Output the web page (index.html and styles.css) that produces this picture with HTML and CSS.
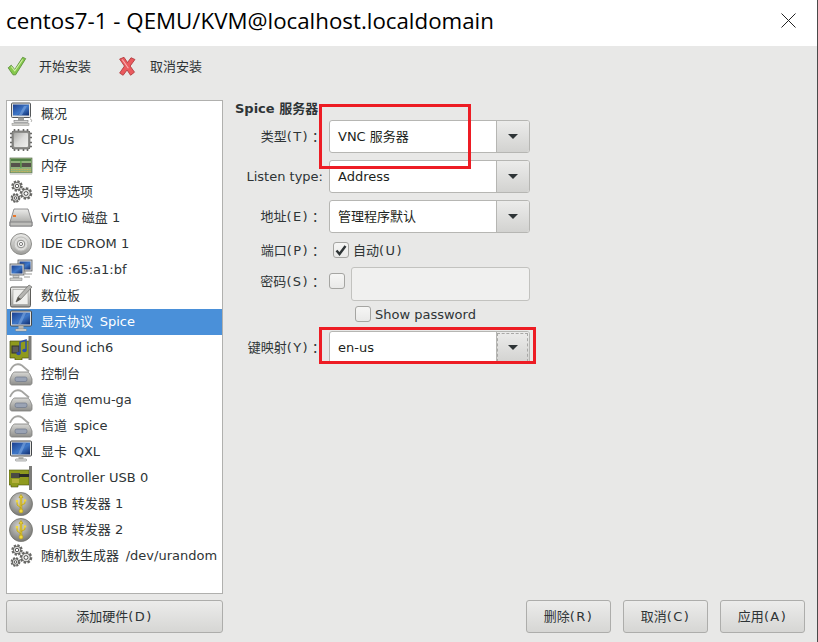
FILE: index.html
```html
<!DOCTYPE html>
<html lang="zh-CN">
<head>
<meta charset="utf-8">
<title>centos7-1 - QEMU/KVM@localhost.localdomain</title>
<link rel="stylesheet" href="styles.css">
</head>
<body>
<svg class="defs" width="0" height="0" aria-hidden="true">
  <defs>
    <linearGradient id="g-screen" x1="0" y1="0" x2="1" y2="1"><stop offset="0" stop-color="#1b3f8f"/><stop offset=".55" stop-color="#3f78c8"/><stop offset="1" stop-color="#0f2c6e"/></linearGradient>
    <linearGradient id="g-metal" x1="0" y1="0" x2="0" y2="1"><stop offset="0" stop-color="#ececea"/><stop offset="1" stop-color="#9c9c99"/></linearGradient>
    <linearGradient id="g-body" x1="0" y1="0" x2="0" y2="1"><stop offset="0" stop-color="#d6d6d3"/><stop offset="1" stop-color="#8e8e8b"/></linearGradient>
    <linearGradient id="g-chip" x1="0" y1="0" x2="1" y2="1"><stop offset="0" stop-color="#a9a9a6"/><stop offset=".5" stop-color="#dcdcda"/><stop offset="1" stop-color="#efefed"/></linearGradient>
    <radialGradient id="g-ball" cx=".45" cy=".35" r=".7"><stop offset="0" stop-color="#d9d9d6"/><stop offset="1" stop-color="#6f6f6b"/></radialGradient>
    <symbol id="i-monitor" viewBox="0 0 24 24">
      <rect x="2.500" y="1" width="19" height="14.500" rx="1" fill="#e4e4e2" stroke="#55585a"/>
      <rect x="4" y="2.500" width="16" height="11" fill="url(#g-screen)"/>
      <path d="M10 13l5-9h3l-5 9z" fill="#7ea6de" opacity=".6"/>
      <rect x="9" y="15.500" width="6" height="3" fill="#9b9b98"/>
      <rect x="5" y="18.500" width="14" height="2" fill="#d8d8d6" stroke="#77797a" stroke-width=".6"/>
      <rect x="3" y="21.500" width="17" height="2" fill="#cfcfcc" stroke="#8b8b88" stroke-width=".5"/>
      <path d="M21 17c2 0 2 2 1 3" fill="none" stroke="#b0b0ad"/>
    </symbol>
    <symbol id="i-display" viewBox="0 0 24 24">
      <rect x="1.500" y="1" width="21" height="15" rx="1" fill="#e4e4e2" stroke="#44474a"/>
      <rect x="3" y="2.500" width="18" height="12" fill="url(#g-screen)"/>
      <path d="M9 14l5-11h3l-5 11z" fill="#7ea6de" opacity=".6"/>
      <rect x="9.500" y="16" width="5" height="3" fill="#b5b5b2"/>
      <rect x="6.500" y="19" width="11" height="2" rx=".6" fill="#e7e7e5" stroke="#77797a" stroke-width=".6"/>
    </symbol>
    <symbol id="i-cpu" viewBox="0 0 24 24">
      <rect x="3" y="3" width="18" height="18" fill="#7d7d7a"/>
      <path d="M1 5.500h22M1 9.500h22M1 14.500h22M1 18.500h22M5.500 1v22M9.500 1v22M14.500 1v22M18.500 1v22" stroke="#6a6a67" stroke-width="1.600" fill="none"/>
      <rect x="3" y="3" width="18" height="18" rx="2" fill="#8e8e8b" stroke="#6a6a67" stroke-width=".7"/>
      <rect x="5" y="5" width="14" height="14" rx="1" fill="url(#g-chip)"/>
    </symbol>
    <symbol id="i-ram" viewBox="0 0 24 24">
      <rect x="1" y="4" width="22" height="15" fill="#8fb17a" stroke="#5d6f52" stroke-width=".7"/>
      <rect x="2" y="5" width="20" height="2" fill="#4f7e44"/>
      <rect x="2" y="9" width="9.500" height="4" fill="#55524b"/>
      <rect x="12.500" y="9" width="9.500" height="4" fill="#55524b"/>
      <path d="M11.900 7v7" stroke="#4f9c3d"/>
      <path d="M2 15.500h20M2 17.500h20" stroke="#c9b25c" stroke-width="1.200" stroke-dasharray="1 .6"/>
      <rect x="1" y="19.500" width="22" height="1.500" fill="#d8d8d5"/>
    </symbol>
    <symbol id="i-gears" viewBox="0 0 24 24">
      <g fill="none" stroke="#6a6a67">
        <circle cx="8" cy="6" r="4.500" stroke-width="2.400" stroke-dasharray="2.200 1.300"/>
        <circle cx="17" cy="13.500" r="5" stroke-width="2.600" stroke-dasharray="2.400 1.400"/>
        <circle cx="6.500" cy="18" r="3.800" stroke-width="2.200" stroke-dasharray="2 1"/>
      </g>
      <g fill="#dededc" stroke="#4a4a48" stroke-width=".8">
        <circle cx="8" cy="6" r="3.800"/>
        <circle cx="17" cy="13.500" r="4.300"/>
        <circle cx="6.500" cy="18" r="3.200"/>
      </g>
      <g fill="#fff" stroke="#4a4a48" stroke-width=".9">
        <circle cx="8" cy="6" r="1.700"/>
        <circle cx="17" cy="13.500" r="1.900"/>
        <circle cx="6.500" cy="18" r="1.300"/>
      </g>
    </symbol>
    <symbol id="i-disk" viewBox="0 0 24 24">
      <path d="M5 3h14l4 13v4H1v-4z" fill="url(#g-metal)" stroke="#77777a" stroke-width=".8"/>
      <path d="M1 16h22v4H1z" fill="#bdbdba" stroke="#77777a" stroke-width=".8"/>
      <rect x="4" y="9" width="3" height="2" fill="#e9772a"/>
    </symbol>
    <symbol id="i-cd" viewBox="0 0 24 24">
      <circle cx="12" cy="12" r="10.500" fill="url(#g-metal)" stroke="#8d8d8a"/>
      <circle cx="12" cy="12" r="7" fill="#dcdcda" stroke="#bcbcb9"/>
      <circle cx="12" cy="12" r="3.800" fill="#f5f5f4" stroke="#8d8d8a"/>
      <circle cx="12" cy="12" r="1.600" fill="#fff" stroke="#777"/>
    </symbol>
    <symbol id="i-nic" viewBox="0 0 24 24">
      <rect x="9" y="2" width="14" height="11" fill="#dedede" stroke="#55585a" stroke-width=".8"/>
      <rect x="10.500" y="3.500" width="11" height="8" fill="url(#g-screen)"/>
      <rect x="1" y="6" width="14" height="11" fill="#dedede" stroke="#55585a" stroke-width=".8"/>
      <rect x="2.500" y="7.500" width="11" height="8" fill="url(#g-screen)"/>
      <path d="M4 17.500h6v2H4zM1 20h12v2.500H1z" fill="#cfcfcc" stroke="#77797a" stroke-width=".5"/>
      <path d="M16 13v3h7M15 19h6" stroke="#9a9a97" fill="none"/>
    </symbol>
    <symbol id="i-tablet" viewBox="0 0 24 24">
      <rect x="1.500" y="3" width="20" height="20" rx="1.500" fill="url(#g-metal)" stroke="#5d5d5a"/>
      <rect x="4" y="5.500" width="15" height="15" fill="#efefed" stroke="#9d9d9a" stroke-width=".6"/>
      <path d="M7 18l2-5L20 1l3 2-11 12z" fill="#b5b5b2" stroke="#6c6c69" stroke-width=".7"/>
      <path d="M7 18l2-5 3 2z" fill="#55524b"/>
    </symbol>
    <symbol id="i-sound" viewBox="0 0 24 24">
      <path d="M1 5h19v17h-7v2H6v-2H1z" fill="#8f9a1e" stroke="#4b5212" stroke-width=".7"/>
      <path d="M21 0v24" stroke="#7c7c79" stroke-width="3"/>
      <rect x="3" y="10" width="7" height="7" fill="#5d5d5a" stroke="#333"/>
      <path d="M11 17V6l6-2v10" fill="none" stroke="#2f4fa8" stroke-width="1.500"/>
      <ellipse cx="9.500" cy="17.500" rx="2.200" ry="1.700" fill="#2f4fa8"/>
      <ellipse cx="15.500" cy="14.500" rx="2.200" ry="1.700" fill="#2f4fa8"/>
    </symbol>
    <symbol id="i-serial" viewBox="0 0 24 24">
      <path d="M1 9C4 2 9 1 13 3.500l7 6" fill="none" stroke="#a4a4a1" stroke-width="1.800"/>
      <path d="M6 10h12c2 0 3 2 5 7v4c0 1-1 2-2 2H3c-1 0-2-1-2-2v-4c2-5 3-7 5-7z" fill="url(#g-body)" stroke="#7b7b78" stroke-width=".8"/>
      <rect x="6" y="15" width="12" height="4.500" rx="1.800" fill="#9aa3b4" stroke="#667084" stroke-width=".6"/>
    </symbol>
    <symbol id="i-pci" viewBox="0 0 24 24">
      <path d="M0 4h20v15H9v2H2v-2H0z" fill="#8f9a1e" stroke="#4b5212" stroke-width=".6"/>
      <rect x="2" y="7" width="9" height="5" fill="#4a4a45"/>
      <rect x="10" y="8" width="10" height="3" fill="#2b2b28"/>
      <path d="M3 14h7M3 16h7" stroke="#d9c65a" stroke-width="1"/>
      <path d="M21.500 0v24" stroke="#7c7c79" stroke-width="3"/>
    </symbol>
    <symbol id="i-usb" viewBox="0 0 24 24">
      <circle cx="12" cy="12" r="11.500" fill="url(#g-ball)" stroke="#73736f" stroke-width=".8"/>
      <path d="M12 2.500l2 3h-1.200v12h-1.600v-12H10zM12 16l-4-3V10M12 13.500l4-2V9" fill="#f0d83a" stroke="#b59b12" stroke-width=".7"/>
      <circle cx="12" cy="19" r="2" fill="#f0d83a" stroke="#b59b12" stroke-width=".6"/>
      <rect x="6.800" y="8" width="2.400" height="2.400" fill="#f0d83a"/>
      <circle cx="16" cy="8.500" r="1.300" fill="#f0d83a"/>
    </symbol>
    <symbol id="i-check" viewBox="0 0 24 24">
      <path d="M2.500 13.500L6 10.500l4 5L19 1.500l3.500 1.500L11 21.500H8z" fill="#86c94c" stroke="#5a8f3a"/>
      <path d="M6 12l4 5 9-13" fill="none" stroke="#d2efa8" stroke-width="1.200"/>
    </symbol>
    <symbol id="i-cross" viewBox="0 0 24 24">
      <path d="M3 3.500L8 1.500l4 6 4-5.500 4.500 2L15 11.500l5 7-4.500 3.500-4-6-4.500 6L3 19.500l5.500-8z" fill="#ea5a5e" stroke="#b03a3e"/>
      <path d="M6 4l7 10" stroke="#f7b3b5" stroke-width="1.200"/>
    </symbol>
  </defs>
</svg>

<div class="window">
  <header class="titlebar">
    <h1 class="title">centos7-1 - QEMU/KVM@localhost.localdomain</h1>
    <svg class="close" width="15" height="15" viewBox="0 0 15 15"><path d="M.5.500l14 14M14.500.500l-14 14" stroke="#222" fill="none"/></svg>
  </header>

  <nav class="toolbar">
    <button class="tool"><svg class="tool-icon"><use href="#i-check"/></svg>开始安装</button>
    <button class="tool"><svg class="tool-icon"><use href="#i-cross"/></svg>取消安装</button>
  </nav>

  <main class="content">
    <aside class="sidebar">
      <ul class="list">
        <li class="row"><svg class="icon"><use href="#i-monitor"/></svg>概况</li>
        <li class="row"><svg class="icon"><use href="#i-cpu"/></svg>CPUs</li>
        <li class="row"><svg class="icon"><use href="#i-ram"/></svg>内存</li>
        <li class="row"><svg class="icon"><use href="#i-gears"/></svg>引导选项</li>
        <li class="row"><svg class="icon"><use href="#i-disk"/></svg>VirtIO 磁盘 1</li>
        <li class="row"><svg class="icon"><use href="#i-cd"/></svg>IDE CDROM 1</li>
        <li class="row"><svg class="icon"><use href="#i-nic"/></svg>NIC :65:a1:bf</li>
        <li class="row"><svg class="icon"><use href="#i-tablet"/></svg>数位板</li>
        <li class="row selected"><svg class="icon"><use href="#i-display"/></svg>显示协议 &#8201;Spice</li>
        <li class="row"><svg class="icon"><use href="#i-sound"/></svg>Sound ich6</li>
        <li class="row"><svg class="icon"><use href="#i-serial"/></svg>控制台</li>
        <li class="row"><svg class="icon"><use href="#i-serial"/></svg>信道 &#8201;qemu-ga</li>
        <li class="row"><svg class="icon"><use href="#i-serial"/></svg>信道 &#8201;spice</li>
        <li class="row"><svg class="icon"><use href="#i-display"/></svg>显卡 &#8201;QXL</li>
        <li class="row"><svg class="icon"><use href="#i-pci"/></svg>Controller USB 0</li>
        <li class="row"><svg class="icon"><use href="#i-usb"/></svg>USB 转发器 1</li>
        <li class="row"><svg class="icon"><use href="#i-usb"/></svg>USB 转发器 2</li>
        <li class="row"><svg class="icon"><use href="#i-gears"/></svg>随机数生成器 &#8201;/dev/urandom</li>
      </ul>
    </aside>

    <section class="panel">
      <h2 class="heading">Spice 服务器</h2>
      <div class="form">
        <label class="label label-cn">类型<span class="mn">(T)</span>：</label>
        <div class="combo"><span class="combo-text">VNC 服务器</span><span class="combo-btn"><i class="arrow"></i></span></div>
        <label class="label">Listen type:</label>
        <div class="combo"><span class="combo-text">Address</span><span class="combo-btn"><i class="arrow"></i></span></div>
        <label class="label label-cn">地址<span class="mn">(E)</span>：</label>
        <div class="combo"><span class="combo-text">管理程序默认</span><span class="combo-btn"><i class="arrow"></i></span></div>
        <label class="label label-cn">端口<span class="mn">(P)</span>：</label>
        <div class="port"><span class="checkbox"><svg width="12" height="11" viewBox="0 0 12 11"><path d="M1.500 5.500l3 3.500 6-8" fill="none" stroke="#2e3436" stroke-width="2.400"/></svg></span><span>自动<span class="mn mn-end">(U)</span></span></div>
        <label class="label label-cn label-pass">密码<span class="mn">(S)</span>：</label>
        <div class="pass"><span class="checkbox"></span><span class="entry"></span></div>
        <span></span>
        <div class="show"><span class="checkbox"></span>Show password</div>
        <label class="label label-cn label-key">键映射<span class="mn">(Y)</span>：</label>
        <div class="combo combo-key focused"><span class="combo-text">en-us</span><span class="combo-btn"><i class="arrow"></i></span></div>
      </div>
    </section>
  </main>

  <footer class="footer">
    <button class="btn btn-add">添加硬件<span class="mn mn-end">(D)</span></button>
    <div class="actions">
      <button class="btn btn-act">删除<span class="mn mn-end">(R)</span></button>
      <button class="btn btn-act">取消<span class="mn mn-end">(C)</span></button>
      <button class="btn btn-act">应用<span class="mn mn-end">(A)</span></button>
    </div>
  </footer>

  <div class="mark mark-type"></div>
  <div class="mark mark-key"></div>
</div>
</body>
</html>
```
FILE: styles.css
```css
* { box-sizing: border-box; }
html, body { margin: 0; padding: 0; }
body {
  width: 818px;
  height: 642px;
  overflow: hidden;
  font-family: "DejaVu Sans", "Noto Sans CJK SC", sans-serif;
  font-size: 13px;
  line-height: 15px;
  color: #2e3436;
}
.defs { position: absolute; }

.window {
  position: relative;
  width: 818px;
  height: 642px;
  display: flex;
  flex-direction: column;
  background: #e8e8e7;
  border-right: 1px solid #4a4a4a;
}

.titlebar {
  height: 46px;
  flex: none;
  background: #fff;
  display: flex;
  align-items: center;
  justify-content: space-between;
  padding: 0 21px 5px 6px;
}
.title {
  margin: 0;
  font-family: "Open Sans", "Noto Sans CJK SC", sans-serif;
  font-weight: 400;
  font-size: 22.3px;
  line-height: 30px;
  color: #000;
  white-space: nowrap;
}
.close { display: block; }

.toolbar {
  height: 54px;
  flex: none;
  display: flex;
  align-items: flex-start;
  gap: 26px;
  padding: 8px 0 0 6px;
}
.tool {
  display: flex;
  align-items: center;
  gap: 12px;
  height: 24px;
  padding: 0;
  border: 0;
  background: none;
  font: inherit;
  color: #2e3436;
}
.tool-icon { width: 21px; height: 21px; display: block; }

.content {
  flex: 1;
  min-height: 0;
  display: flex;
  padding-left: 6px;
}
.sidebar {
  width: 217px;
  height: 494px;
  flex: none;
  background: #fff;
  border: 1px solid #b0b0ae;
}
.list { margin: 0; padding: 0; list-style: none; }
.row {
  height: 26px;
  display: flex;
  align-items: center;
  gap: 8px;
  padding: 0 0 2px 2px;
  white-space: pre;
  color: #2e3436;
}
.row.selected { background: #4a90d9; color: #fff; }
.icon { width: 24px; height: 24px; flex: none; display: block; margin-top: 2px; }

.panel {
  flex: 1;
  padding: 1px 0 0 12px;
}
.heading {
  margin: 0;
  height: 19px;
  font-size: 13px;
  font-weight: 700;
  line-height: 15px;
  color: #2e3436;
}
.form {
  display: grid;
  grid-template-columns: 88px 201px;
  grid-template-rows: 33px 33px 33px 20px 34px 14px 35px;
  column-gap: 6px;
  row-gap: 7px;
  align-items: center;
}
.label { text-align: right; white-space: nowrap; color: #2e3436; }
.label-cn { margin-right: -2px; }
.label-pass { align-self: start; margin-top: 7px; }
.label-key { margin-top: 2px; }
.mn { letter-spacing: 1.4px; margin-right: 3px; }
.mn-end { margin-right: 0; }

.combo {
  height: 33px;
  display: flex;
  background: #fff;
  border: 1px solid #b6b6b3;
  border-radius: 3px;
  overflow: hidden;
}
.combo-key { margin-top: 2px; }
.combo-text {
  flex: 1;
  padding-left: 8px;
  display: flex;
  align-items: center;
  color: #1c1f20;
}
.combo-btn {
  width: 33px;
  display: flex;
  align-items: center;
  justify-content: center;
  border-left: 1px solid #b6b6b3;
  background: linear-gradient(#ececeb, #d2d2d0);
}
.arrow {
  width: 0;
  height: 0;
  border-left: 5px solid transparent;
  border-right: 5px solid transparent;
  border-top: 5px solid #2e3436;
}
.focused .combo-btn { outline: 1px dashed #a8a8a6; outline-offset: -2px; }

.checkbox {
  width: 16px;
  height: 16px;
  flex: none;
  display: inline-flex;
  align-items: center;
  justify-content: center;
  background: linear-gradient(#f6f6f5, #e9e9e8);
  border: 1px solid #a5a5a2;
  border-radius: 3px;
}
.port {
  display: flex;
  align-items: center;
  gap: 4px;
  padding-left: 4px;
  color: #2e3436;
}
.pass {
  display: flex;
  align-items: flex-start;
  gap: 6px;
  height: 34px;
}
.pass .checkbox { margin-top: 6px; }
.entry {
  flex: 1;
  height: 34px;
  background: #f0f0ef;
  border: 1px solid #c2c2bf;
  border-radius: 3px;
}
.show {
  display: flex;
  align-items: center;
  gap: 4px;
  height: 16px;
  margin-top: -2px;
  padding-left: 26px;
  color: #2e3436;
}

.footer {
  flex: none;
  height: 42px;
  display: flex;
  justify-content: space-between;
  padding: 0 12px 9px 6px;
}
.btn {
  height: 33px;
  padding: 0;
  font: inherit;
  color: #2e3436;
  background: linear-gradient(#ececeb, #d6d6d4);
  border: 1px solid #adadab;
  border-radius: 3px;
}
.btn-add { width: 217px; }
.actions { display: flex; gap: 12px; }
.btn-act { width: 85px; }

.mark {
  position: absolute;
  border: 3px solid #ed1c24;
  pointer-events: none;
}
.mark-type { left: 319px; top: 104px; width: 152px; height: 65px; }
.mark-key { left: 319px; top: 327px; width: 217px; height: 37px; }
```
